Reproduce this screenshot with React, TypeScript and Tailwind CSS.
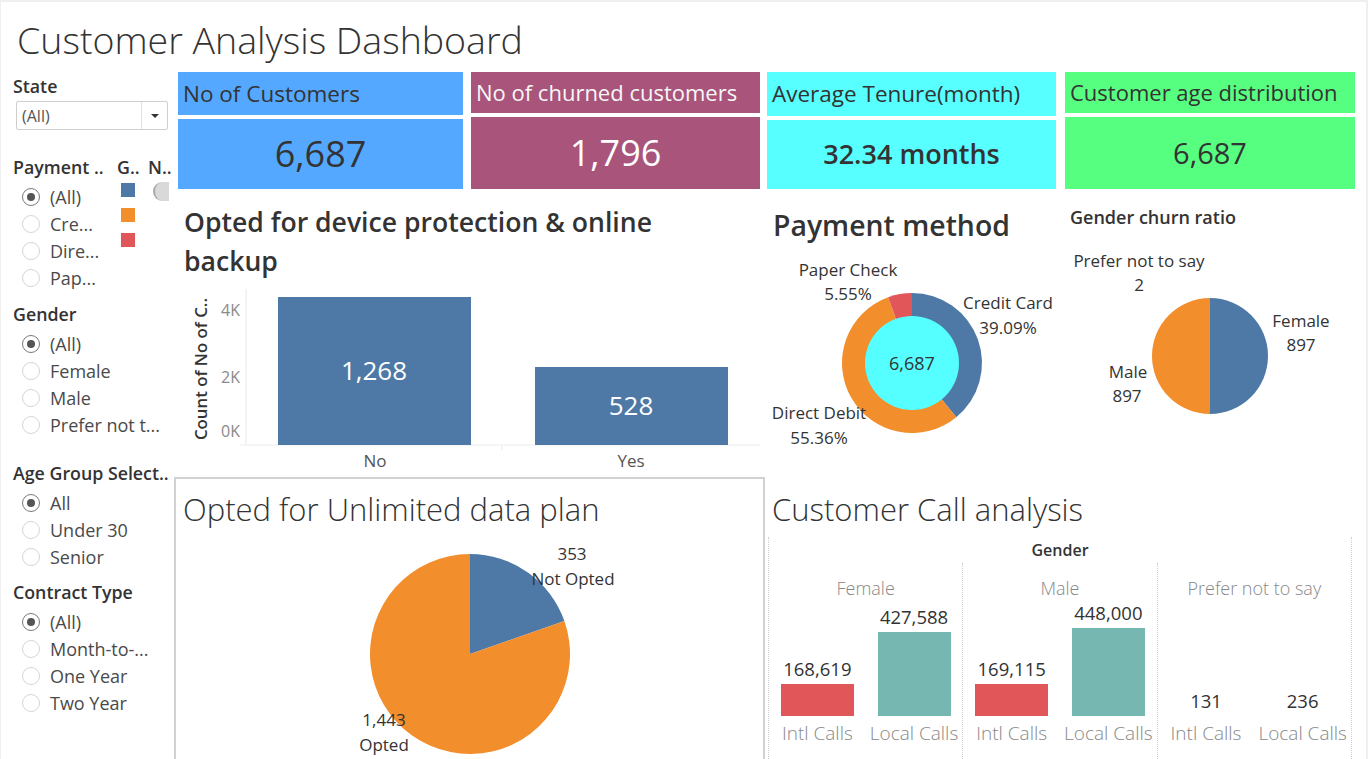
import React from "react";

const BLUE = "#4e79a7";
const ORANGE = "#f28e2b";
const RED = "#e15759";

function slice(cx: number, cy: number, r: number, a0: number, a1: number) {
  const rad = (d: number) => ((d - 90) * Math.PI) / 180;
  const x0 = cx + r * Math.cos(rad(a0));
  const y0 = cy + r * Math.sin(rad(a0));
  const x1 = cx + r * Math.cos(rad(a1));
  const y1 = cy + r * Math.sin(rad(a1));
  const large = a1 - a0 > 180 ? 1 : 0;
  return `M${cx},${cy} L${x0},${y0} A${r},${r} 0 ${large} 1 ${x1},${y1} Z`;
}

function Radio({ label, checked }: { label: string; checked?: boolean }) {
  return (
    <div className="flex items-center h-[27px] pl-[9px]">
      <span
        className={
          checked
            ? "w-[18px] h-[18px] rounded-full border border-[#7a7a7a] flex items-center justify-center shrink-0"
            : "w-[18px] h-[18px] rounded-full border border-[#d6d6d6] flex items-center justify-center shrink-0"
        }
      >
        {checked && <span className="w-[8px] h-[8px] rounded-full bg-[#555]" />}
      </span>
      <span className="ml-[10px] text-[18px] text-[#4a4a4a] whitespace-nowrap leading-none">{label}</span>
    </div>
  );
}

function Header({ children }: { children: React.ReactNode }) {
  return <div className="h-[22px] leading-[22px] text-[17.8px] font-semibold text-[#333] whitespace-nowrap">{children}</div>;
}

function Sidebar() {
  return (
    <div className="w-[169px] shrink-0 pl-[12px] pt-[3px]">
      <Header>State</Header>
      <div className="mt-[4px] ml-[3px] w-[152px] h-[29px] border border-[#cfcfcf] rounded-[2px] flex items-center">
        <span className="flex-1 pl-[5px] text-[16px] text-[#555]">(All)</span>
        <span className="w-[26px] h-full border-l border-[#e0e0e0] flex items-center justify-center">
          <span className="w-0 h-0 border-l-[4px] border-r-[4px] border-t-[4px] border-l-transparent border-r-transparent border-t-[#333]" />
        </span>
      </div>

      <div className="mt-[26px] flex">
        <div className="w-[104px]">
          <Header>Payment ..</Header>
          <div className="mt-[5px]">
            <Radio label="(All)" checked />
            <Radio label="Cre..." />
            <Radio label="Dire..." />
            <Radio label="Pap..." />
          </div>
        </div>
        <div className="w-[31px]">
          <Header>G..</Header>
          <div className="mt-[5px] ml-[4px] flex flex-col gap-[11px]">
            <span className="w-[14px] h-[14px] bg-[#4e79a7]" />
            <span className="w-[14px] h-[14px] bg-[#f28e2b]" />
            <span className="w-[14px] h-[14px] bg-[#e15759]" />
          </div>
        </div>
        <div className="w-[22px]">
          <Header>N..</Header>
          <div className="mt-[4px] ml-[5px] w-[16px] h-[19px] rounded-l-full bg-[#d9d9d9] border-l-2 border-[#a8a8a8]" />
        </div>
      </div>

      <div className="mt-[12px]">
        <Header>Gender</Header>
        <div className="mt-[5px]">
          <Radio label="(All)" checked />
          <Radio label="Female" />
          <Radio label="Male" />
          <Radio label="Prefer not t..." />
        </div>
      </div>

      <div className="mt-[24px]">
        <Header>Age Group Select..</Header>
        <div className="mt-[5px]">
          <Radio label="All" checked />
          <Radio label="Under 30" />
          <Radio label="Senior" />
        </div>
      </div>

      <div className="mt-[11px]">
        <Header>Contract Type</Header>
        <div className="mt-[5px]">
          <Radio label="(All)" checked />
          <Radio label="Month-to-..." />
          <Radio label="One Year" />
          <Radio label="Two Year" />
        </div>
      </div>
    </div>
  );
}

function KpiRow() {
  return (
    <div className="flex ml-[8px] h-[117px]">
      <div className="w-[285px] flex flex-col">
        <div className="h-[43px] bg-[#55a8ff] flex items-center pl-[5px] text-[22.5px] text-[#333] whitespace-nowrap">No of Customers</div>
        <div className="mt-[4px] flex-1 bg-[#55a8ff] flex items-center justify-center text-[36px] text-[#333]">6,687</div>
      </div>
      <div className="ml-[8px] w-[289px] flex flex-col">
        <div className="h-[41px] bg-[#a8547b] flex items-center pl-[5px] text-[22px] text-[#f7f7f7] whitespace-nowrap">No of churned customers</div>
        <div className="mt-[4px] flex-1 bg-[#a8547b] flex items-center justify-center text-[36px] text-white">1,796</div>
      </div>
      <div className="ml-[7px] w-[289px] flex flex-col">
        <div className="h-[44px] bg-[#58ffff] flex items-center pl-[5px] text-[22.5px] text-[#333] whitespace-nowrap">Average Tenure(month)</div>
        <div className="mt-[4px] flex-1 bg-[#58ffff] flex items-center justify-center text-[27px] font-semibold text-[#333]">32.34 months</div>
      </div>
      <div className="ml-[9px] w-[290px] flex flex-col">
        <div className="h-[41px] bg-[#57ff80] flex items-center pl-[5px] text-[22px] text-[#333] whitespace-nowrap">Customer age distribution</div>
        <div className="mt-[4px] flex-1 bg-[#57ff80] flex items-center justify-center text-[29px] font-medium text-[#333]">6,687</div>
      </div>
    </div>
  );
}

function DeviceChart() {
  return (
    <div className="w-[582px] ml-[8px] shrink-0">
      <div className="pt-[14px] pl-[6px] text-[26.6px] leading-[39px] font-semibold text-[#333] whitespace-nowrap">
        Opted for device protection &amp; online
        <br />
        backup
      </div>
      <svg width="582" height="196" className="block">
        <text x="22" y="88" transform="rotate(-90 22 88)" textAnchor="middle" dominantBaseline="central" fontSize="16.8" fontWeight="600" fill="#333">
          Count of No of C..
        </text>
        <line x1="68" y1="8" x2="68" y2="164" stroke="#e8e8e8" />
        <line x1="62" y1="164" x2="582" y2="164" stroke="#ececec" />
        <line x1="324" y1="164" x2="324" y2="169" stroke="#ececec" />
        <text x="62" y="29" textAnchor="end" dominantBaseline="central" fontSize="16" fill="#8a8a8a">4K</text>
        <text x="62" y="96" textAnchor="end" dominantBaseline="central" fontSize="16" fill="#8a8a8a">2K</text>
        <text x="62" y="150" textAnchor="end" dominantBaseline="central" fontSize="16" fill="#8a8a8a">0K</text>
        <rect x="100" y="16" width="193" height="148" fill={BLUE} />
        <rect x="357" y="86" width="193" height="78" fill={BLUE} />
        <text x="196" y="89" textAnchor="middle" dominantBaseline="central" fontSize="26" fill="#fff">1,268</text>
        <text x="453" y="124" textAnchor="middle" dominantBaseline="central" fontSize="26" fill="#fff">528</text>
        <text x="197" y="179" textAnchor="middle" dominantBaseline="central" fontSize="17" fill="#555">No</text>
        <text x="453" y="179" textAnchor="middle" dominantBaseline="central" fontSize="17" fill="#555">Yes</text>
      </svg>
    </div>
  );
}

function PaymentChart() {
  const cx = 152;
  const cy = 118;
  const lbl = { textAnchor: "middle" as const, dominantBaseline: "central" as const, fontSize: 17, fill: "#333" };
  return (
    <div className="w-[300px] shrink-0">
      <div className="pt-[18px] pl-[13px] text-[28.4px] leading-[36px] font-semibold text-[#333] whitespace-nowrap">Payment method</div>
      <svg width="300" height="220" className="block mt-[2px]">
        <path d={slice(cx, cy, 70, 0, 140.72)} fill={BLUE} />
        <path d={slice(cx, cy, 70, 140.72, 340.02)} fill={ORANGE} />
        <path d={slice(cx, cy, 70, 340.02, 360)} fill={RED} />
        <circle cx={cx} cy={cy} r="47" fill="#55ffff" />
        <text x={cx} y={cy} {...lbl} fontSize={18}>6,687</text>
        <text x="88" y="24" {...lbl}>Paper Check</text>
        <text x="88" y="48" {...lbl}>5.55%</text>
        <text x="248" y="57" {...lbl}>Credit Card</text>
        <text x="248" y="82" {...lbl}>39.09%</text>
        <text x="59" y="167" {...lbl}>Direct Debit</text>
        <text x="59" y="192" {...lbl}>55.36%</text>
      </svg>
    </div>
  );
}

function GenderChart() {
  const lbl = { textAnchor: "middle" as const, dominantBaseline: "central" as const, fontSize: 17, fill: "#333" };
  return (
    <div className="w-[300px] shrink-0">
      <div className="pt-[16px] pl-[10px] text-[18px] leading-[24px] font-semibold text-[#333] whitespace-nowrap">Gender churn ratio</div>
      <svg width="300" height="220" className="block mt-[11px]">
        <path d={slice(150, 116, 58, 0, 180)} fill={BLUE} />
        <path d={slice(150, 116, 58, 180, 360)} fill={ORANGE} />
        <text x="79" y="20" {...lbl}>Prefer not to say</text>
        <text x="79" y="44" {...lbl}>2</text>
        <text x="241" y="80" {...lbl}>Female</text>
        <text x="241" y="104" {...lbl}>897</text>
        <text x="68" y="131" {...lbl}>Male</text>
        <text x="67" y="155" {...lbl}>897</text>
      </svg>
    </div>
  );
}

function UnlimitedChart() {
  const lbl = { textAnchor: "middle" as const, dominantBaseline: "central" as const, fontSize: 17, fill: "#333" };
  return (
    <div className="ml-[4px] w-[591px] h-[300px] border-2 border-[#d2d2d2] shrink-0">
      <div className="pt-[11px] pl-[7px] text-[31px] leading-[38px] font-light text-[#333] whitespace-nowrap">Opted for Unlimited data plan</div>
      <svg width="587" height="240" className="block mt-[2px]">
        <path d={slice(294, 124, 100, 0, 70.75)} fill={BLUE} />
        <path d={slice(294, 124, 100, 70.75, 360)} fill={ORANGE} />
        <text x="396" y="23" {...lbl}>353</text>
        <text x="397" y="48" {...lbl}>Not Opted</text>
        <text x="208" y="189" {...lbl}>1,443</text>
        <text x="208" y="214" {...lbl}>Opted</text>
      </svg>
    </div>
  );
}

type Col = { name: string; intl: string; local: string; ih: number; lh: number };

function CallChart() {
  const cols: Col[] = [
    { name: "Female", intl: "168,619", local: "427,588", ih: 32, lh: 84 },
    { name: "Male", intl: "169,115", local: "448,000", ih: 32, lh: 88 },
    { name: "Prefer not to say", intl: "131", local: "236", ih: 0, lh: 0 },
  ];
  return (
    <div className="ml-[3px] w-[590px] shrink-0">
      <div className="pt-[13px] pl-[4px] text-[31px] leading-[38px] font-light text-[#333] whitespace-nowrap">Customer Call analysis</div>
      <div className="mt-[9px] w-[584px] h-[240px] border-l border-r border-dotted border-[#cfcfcf]">
        <div className="h-[26px] leading-[26px] text-center text-[16px] font-semibold text-[#333]">Gender</div>
        <div className="flex h-[214px]">
          {cols.map((c, i) => (
            <div key={c.name} className={i === 0 ? "flex-1 flex flex-col" : "flex-1 flex flex-col border-l border-dotted border-[#cfcfcf]"}>
              <div className="pt-[12px] h-[38px] leading-[26px] text-center text-[18px] font-light text-[#888] whitespace-nowrap">{c.name}</div>
              <div className="flex h-[115px]">
                {[
                  { v: c.intl, h: c.ih, red: true },
                  { v: c.local, h: c.lh, red: false },
                ].map((b, j) => (
                  <div key={j} className="flex-1 flex flex-col items-center justify-end">
                    <div className="h-[24px] leading-[24px] mb-[3px] text-[18.5px] text-[#333]">{b.v}</div>
                    <div className={b.red ? "w-[73px] bg-[#e15759]" : "w-[73px] bg-[#76b7b2]"} style={{ height: b.h }} />
                  </div>
                ))}
              </div>
              <div className="flex mt-[5px]">
                <div className="flex-1 text-center h-[24px] leading-[24px] text-[19px] font-light text-[#888] whitespace-nowrap">Intl Calls</div>
                <div className="flex-1 text-center h-[24px] leading-[24px] text-[19px] font-light text-[#888] whitespace-nowrap">Local Calls</div>
              </div>
            </div>
          ))}
        </div>
      </div>
    </div>
  );
}

export default function App() {
  return (
    <div className="w-[1368px] h-[759px] overflow-hidden bg-white border-t-2 border-l border-r-2 border-[#efefef] font-['Open_Sans',sans-serif] text-[#333]">
      <div className="h-[70px] pt-[14px] pl-[16px] text-[37.5px] leading-[48px] font-light text-[#333] whitespace-nowrap">Customer Analysis Dashboard</div>
      <div className="flex">
        <Sidebar />
        <div className="flex flex-col">
          <KpiRow />
          <div className="flex h-[288px]">
            <DeviceChart />
            <PaymentChart />
            <GenderChart />
          </div>
          <div className="flex h-[300px]">
            <UnlimitedChart />
            <CallChart />
          </div>
        </div>
      </div>
    </div>
  );
}
